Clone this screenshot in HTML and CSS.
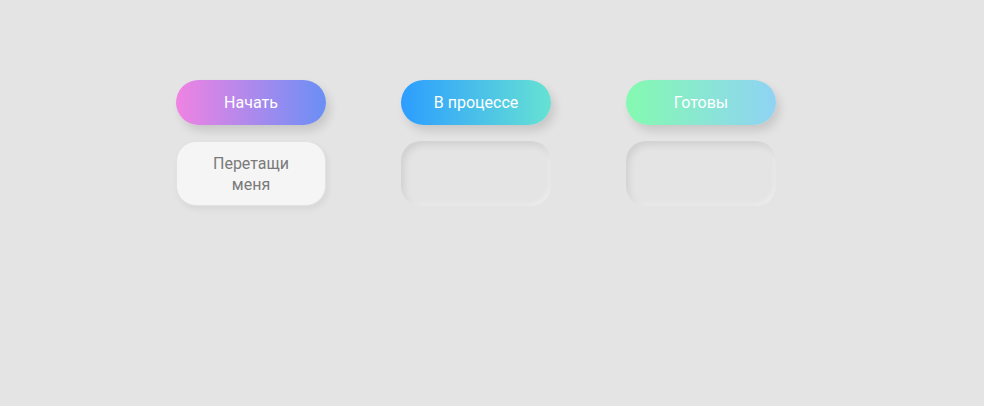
FILE: index.html
```html
<!DOCTYPE html>
<html lang="ru">
<head>
<meta charset="utf-8">
<link rel="stylesheet" href="styles.css">
</head>
<body>
<div class="board">
  <div class="column">
    <div class="head head-start">Начать</div>
    <div class="slot slot-filled"><div class="card">Перетащи меня</div></div>
  </div>
  <div class="column">
    <div class="head head-progress">В процессе</div>
    <div class="slot"></div>
  </div>
  <div class="column">
    <div class="head head-done">Готовы</div>
    <div class="slot"></div>
  </div>
</div>
</body>
</html>
```
FILE: styles.css
```css
html, body {
  margin: 0;
  padding: 0;
  background: #e4e4e4;
  height: 100%;
}
body {
  font-family: Roboto, "Liberation Sans", sans-serif;
}
.board {
  display: flex;
  gap: 75px;
  padding: 80px 0 0 176px;
}
.column {
  display: flex;
  flex-direction: column;
  gap: 16px;
  width: 150px;
}
.head {
  height: 45px;
  border-radius: 23px;
  display: flex;
  align-items: center;
  justify-content: center;
  color: #fff;
  font-size: 16px;
  box-shadow: 4px 6px 10px rgba(0, 0, 0, 0.12);
}
.head-start {
  background: linear-gradient(to right, #f083e2, #6a8ff6);
}
.head-progress {
  background: linear-gradient(to right, #2c9dff, #66e2d3);
}
.head-done {
  background: linear-gradient(to right, #84fab0, #8fd3f4);
}
.slot {
  height: 65px;
  border-radius: 20px;
  background: #e4e4e4;
  box-shadow: inset 3px 4px 7px rgba(0, 0, 0, 0.09), inset -2px -2px 5px rgba(255, 255, 255, 0.35);
}
.slot-filled {
  box-shadow: none;
}
.card {
  box-sizing: border-box;
  height: 65px;
  border-radius: 20px;
  background: #f5f5f5;
  border: 1px solid #e2e2e2;
  box-shadow: 2px 3px 6px rgba(0, 0, 0, 0.06);
  display: flex;
  align-items: center;
  justify-content: center;
  text-align: center;
  padding: 0 28px;
  color: #7a7a7a;
  font-size: 16px;
  line-height: 21px;
}
```
